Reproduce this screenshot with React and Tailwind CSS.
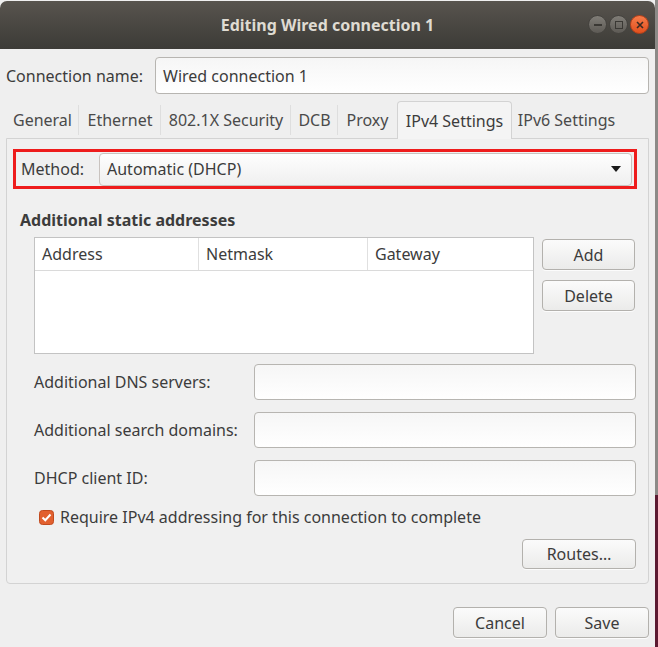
import React from 'react'

const Button = ({ children, className = '' }) => (
  <div
    className={`flex items-center justify-center rounded-[4px] border border-[#b3b1ad] bg-gradient-to-b from-[#fbfbfb] to-[#ebebea] text-[16px] text-[#3c3c3c] shadow-[0_1px_0_rgba(255,255,255,0.8)] ${className}`}
  >
    {children}
  </div>
)

const TextInput = ({ value, className = '' }) => (
  <div
    className={`flex items-center rounded-[4px] border border-[#b7b5b1] bg-gradient-to-b from-[#f6f6f6] to-[#ffffff] pl-[7px] text-[16px] text-[#3c3c3c] ${className}`}
  >
    {value}
  </div>
)

const tabs = [
  { label: 'General', w: 'w-[73px]' },
  { label: 'Ethernet', w: 'w-[82px]' },
  { label: '802.1X Security', w: 'w-[130px]' },
  { label: 'DCB', w: 'w-[47px]' },
  { label: 'Proxy', w: 'w-[59px]' },
  { label: 'IPv4 Settings', w: 'w-[115px]', active: true },
  { label: 'IPv6 Settings', w: 'w-[109px]' }
]

const fields = ['Additional DNS servers:', 'Additional search domains:', 'DHCP client ID:']

export default function App() {
  return (
    <div
      className="flex h-[647px] w-[658px] overflow-hidden bg-[#5b1a31]"
      style={{ fontFamily: '"Noto Sans", "Open Sans", sans-serif' }}
    >
      <div className="flex h-full w-[655px] flex-col bg-[#efefef]">
        {/* Title bar */}
        <div className="relative mt-[1px] flex h-[48px] items-center justify-center rounded-t-[7px] bg-gradient-to-b from-[#58544e] to-[#3c3b37]">
          <span className="text-[16px] font-bold text-[#dfdbd2]">Editing Wired connection 1</span>
          <div className="absolute right-[6px] top-[14px] flex gap-[2px]">
            <div className="flex h-[19px] w-[19px] items-center justify-center rounded-full border border-[#45433f] bg-gradient-to-b from-[#807d77] to-[#5d5a55]">
              <div className="h-[2px] w-[8px] bg-[#3a3834]" />
            </div>
            <div className="flex h-[19px] w-[19px] items-center justify-center rounded-full border border-[#45433f] bg-gradient-to-b from-[#807d77] to-[#5d5a55]">
              <div className="h-[8px] w-[8px] border-[1.5px] border-[#3a3834]" />
            </div>
            <div className="flex h-[19px] w-[19px] items-center justify-center rounded-full border border-[#b8411a] bg-gradient-to-b from-[#f57a48] to-[#e2501c]">
              <svg width="8" height="8" viewBox="0 0 8 8">
                <path d="M1 1 L7 7 M7 1 L1 7" stroke="#3a2a22" strokeWidth="1.6" />
              </svg>
            </div>
          </div>
        </div>

        {/* Connection name */}
        <div className="mt-[8px] flex h-[37px] items-center">
          <span className="w-[155px] shrink-0 pl-[6px] text-[16px] text-[#3c3c3c]">Connection name:</span>
          <TextInput value="Wired connection 1" className="h-[37px] w-[494px]" />
        </div>

        {/* Tabs */}
        <div className="mt-[7px] flex h-[37px] pl-[6px]">
          {tabs.map((t, i) => (
            <div
              key={t.label}
              className={`${t.w} relative flex items-center justify-center whitespace-nowrap text-[16px] ${
                t.active
                  ? 'z-10 -mb-[1px] rounded-t-[4px] border border-b-0 border-[#d3d3d3] bg-[#f4f4f4] text-[#3c3c3c]'
                  : 'text-[#4a4a4a]'
              }`}
            >
              {t.label}
              {!t.active && i < tabs.length - 1 && !tabs[i + 1].active && (
                <div className="absolute right-0 top-[4px] h-[30px] w-[1px] bg-[#dedede]" />
              )}
            </div>
          ))}
        </div>

        {/* Notebook panel */}
        <div className="ml-[6px] flex h-[446px] w-[643px] flex-col rounded-b-[4px] border border-[#d3d3d3] bg-[#f0f0f0] pl-[6px]">
          <div className="mt-[10px] flex h-[40px] w-[624px] items-center border-[3px] border-[#ee1c1c] pl-[5px]">
            <span className="text-[16px] text-[#3c3c3c]">Method:</span>
            <div className="ml-auto mr-[2px] flex h-[33px] w-[533px] items-center rounded-[4px] border border-[#c9c3bf] bg-gradient-to-b from-[#fefefe] to-[#efefef] pl-[7px] pr-[10px] text-[16px] text-[#3c3c3c]">
              <span className="flex-1">Automatic (DHCP)</span>
              <svg width="10" height="6" viewBox="0 0 10 6">
                <path d="M0 0 L10 0 L5 6 Z" fill="#1a1a1a" />
              </svg>
            </div>
          </div>

          <div className="ml-[7px] mt-[21px] h-[20px] text-[16px] font-bold leading-[20px] text-[#3c3c3c]">
            Additional static addresses
          </div>

          <div className="mt-[7px] flex">
            <div className="ml-[21px] flex h-[117px] w-[500px] flex-col border border-[#c3c3c3] bg-white">
              <div className="flex h-[33px] border-b border-[#dadada] text-[16px] text-[#3c3c3c]">
                <div className="flex w-[164px] items-center border-r border-[#e0e0e0] pl-[7px]">Address</div>
                <div className="flex w-[169px] items-center border-r border-[#e0e0e0] pl-[7px]">Netmask</div>
                <div className="flex flex-1 items-center pl-[7px]">Gateway</div>
              </div>
            </div>
            <div className="ml-[8px] flex flex-col">
              <Button className="mt-[2px] h-[31px] w-[93px]">Add</Button>
              <Button className="mt-[10px] h-[31px] w-[93px]">Delete</Button>
            </div>
          </div>

          {fields.map((f, i) => (
            <div key={f} className={`${i === 0 ? 'mt-[10px]' : 'mt-[12px]'} flex h-[36px] items-center`}>
              <span className="ml-[21px] w-[220px] text-[16px] text-[#3c3c3c]">{f}</span>
              <TextInput value="" className="h-[36px] w-[382px]" />
            </div>
          ))}

          <div className="ml-[26px] mt-[11px] flex h-[20px] items-center">
            <svg width="15" height="15" viewBox="0 0 15 15">
              <rect x="0.5" y="0.5" width="14" height="14" rx="3" fill="#e2602f" stroke="#c14a1e" />
              <path d="M3.5 7.5 L6.3 10.2 L11.5 4.5" stroke="#fff" strokeWidth="2" fill="none" />
            </svg>
            <span className="ml-[6px] text-[16px] text-[#3c3c3c]">Require IPv4 addressing for this connection to complete</span>
          </div>

          <Button className="ml-[509px] mt-[12px] h-[30px] w-[114px]">Routes…</Button>
        </div>

        {/* Dialog buttons */}
        <div className="mt-[23px] flex justify-end gap-[8px] pr-[6px]">
          <Button className="h-[31px] w-[94px]">Cancel</Button>
          <Button className="h-[31px] w-[94px]">Save</Button>
        </div>
      </div>
      <div className="flex w-[3px] flex-col">
        <div className="h-[495px] bg-[#8c8a87]" />
        <div className="flex-1 bg-[#5b1a31]" />
      </div>
    </div>
  )
}
